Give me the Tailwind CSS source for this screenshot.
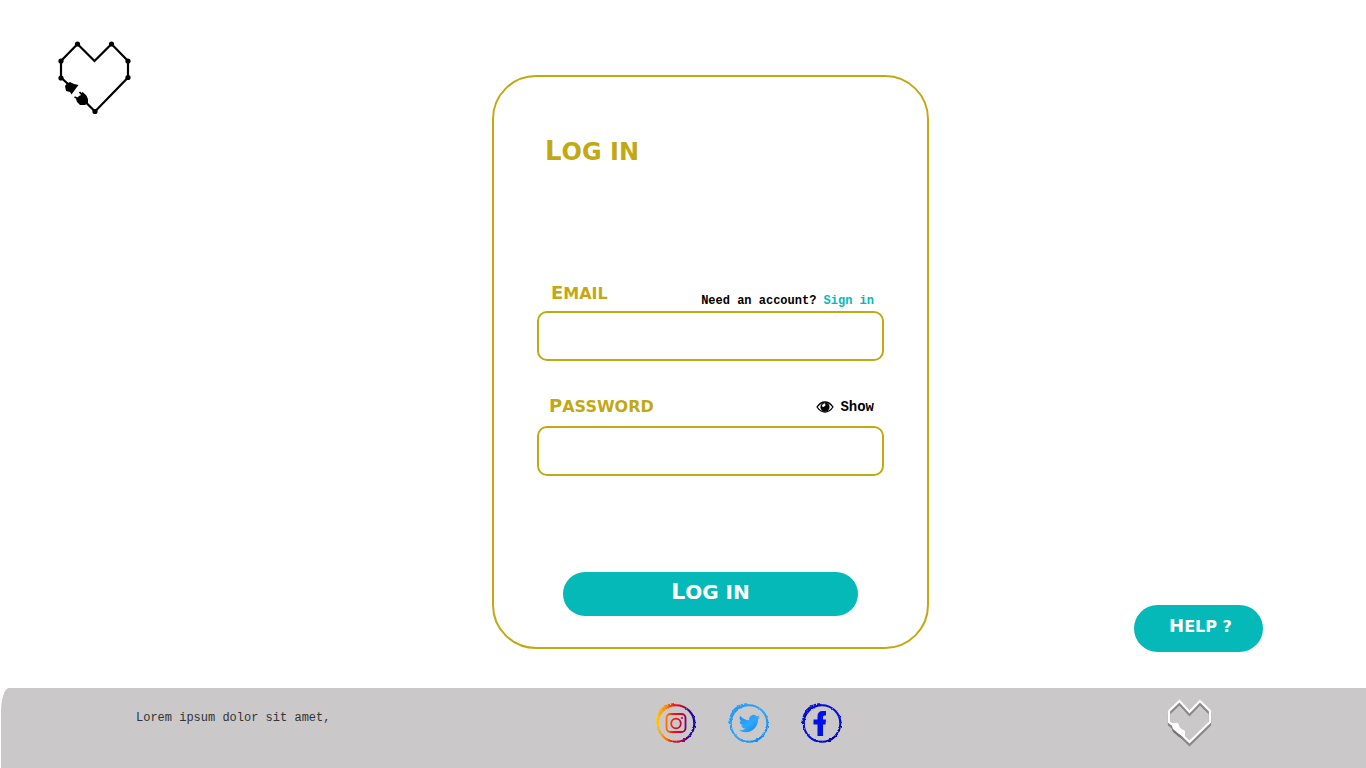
<!DOCTYPE html>
<html lang="en">
<head>
<meta charset="utf-8">
<meta name="viewport" content="width=device-width, initial-scale=1">
<title>Log in</title>
<script src="https://cdn.jsdelivr.net/npm/@tailwindcss/browser@4"></script>
</head>
<body class="flex min-h-screen flex-col bg-white font-['Liberation_Mono',monospace] text-black">
<main class="grid flex-1 grid-cols-[492fr_437fr_437fr] pt-[75px] pb-[39px]">
  <a href="#" aria-label="Home" class="-mt-9 ml-14 size-20 self-start">
    <svg viewBox="0 0 80 80" class="size-20" aria-hidden="true">
      <g fill="none" stroke="#000" stroke-width="2.2">
        <path d="M12 45 5 38.500V22L21.500 5 38.500 22 55.500 5 72 22V38.500L39 72.500 29 62.500"/>
      </g>
      <g fill="#000">
        <circle cx="21.500" cy="5" r="2.600"/><circle cx="55.500" cy="5" r="2.600"/><circle cx="5" cy="22" r="2.600"/><circle cx="72" cy="22" r="2.600"/><circle cx="5" cy="39" r="2.600"/><circle cx="72" cy="38.500" r="2.600"/><circle cx="39" cy="72.500" r="2.600"/>
        <path d="M9 47 11 44.500 14 43 18 45 22.500 46 19.500 50 15.500 55.500 14 53 10 52Z"/>
        <path d="M20 60 23 57 28 54.500 30 56 32 60 32 64 29 66 24 66 21 63Z"/>
        <path d="M18.500 58 23 60M23.500 53 27 57M26 53.500 30 58" stroke="#000" stroke-width="1.800"/>
      </g>
    </svg>
  </a>

  <form onsubmit="return false" class="flex flex-col rounded-[44px] border-2 border-[#c2a914] px-[43px] pt-[58px] pb-[31px]">
    <h1 class="ml-2 h-8 font-[Copperplate,'DejaVu_Sans',sans-serif] text-[24px] leading-8 font-bold text-[#c2a914] uppercase first-letter:text-[26px]">Log in</h1>
    <div class="mt-[114px] flex h-6 items-start justify-between pr-2.5 pl-3.5">
      <label for="email" class="block font-[Copperplate,'DejaVu_Sans',sans-serif] text-[16px] leading-6 font-bold text-[#c2a914] uppercase first-letter:text-[18px]">Email</label>
      <p class="pt-3 text-[12px] leading-4 font-bold">Need an account? <a href="#" class="text-[#06b9b9]">Sign in</a></p>
    </div>
    <input id="email" type="email" class="mt-[6px] h-[50px] w-full rounded-[10px] border-2 border-[#c2a914] px-4 text-[14px]">
    <div class="mt-[33px] flex h-6 items-center justify-between pr-2.5 pl-3">
      <label for="password" class="block font-[Copperplate,'DejaVu_Sans',sans-serif] text-[16px] leading-6 font-bold text-[#c2a914] uppercase first-letter:text-[18px]">Password</label>
      <button type="button" class="flex items-center gap-[6px] pt-px text-[14px] leading-6 font-bold">
        <svg viewBox="0 0 18 12" class="h-3 w-[18px]" aria-hidden="true"><path d="M1 6Q4.500 1 9 1T17 6Q13.500 11 9 11T1 6Z" fill="#fff" stroke="#000" stroke-width="1.300"/><circle cx="9" cy="6" r="4.600"/><path d="M6 5.500Q6 3 9 2.300L9.500 4.500 7.500 6Z" fill="#fff"/></svg>
        Show
      </button>
    </div>
    <input id="password" type="password" class="mt-[8px] h-[50px] w-full rounded-[10px] border-2 border-[#c2a914] px-4 text-[14px]">
    <button type="submit" class="mx-[26px] mt-24 h-11 rounded-full bg-[#06b9b9] pb-1 text-white">
      <span class="block font-[Copperplate,'DejaVu_Sans',sans-serif] text-[20px] leading-6 font-bold uppercase first-letter:text-[22px]">Log in</span>
    </button>
  </form>

  <button type="button" class="mr-[103px] mb-[-3px] h-[47px] w-[129px] self-end justify-self-end rounded-full bg-[#06b9b9] pb-1 pl-1 text-white">
    <span class="block font-[Copperplate,'DejaVu_Sans',sans-serif] text-[16px] leading-6 font-bold uppercase first-letter:text-[18px]">Help ?</span>
  </button>
</main>

<footer class="ml-px grid h-20 grid-cols-[653fr_512fr_200fr] items-start rounded-tl-[8px_24px] bg-[#cac8c9]">
  <p class="pt-[22px] pl-[135px] text-[12px] leading-4 text-[#333]">Lorem ipsum dolor sit amet,</p>
  <nav aria-label="Social" class="flex gap-[29px] pt-[13px]">
    <a href="#" aria-label="Instagram">
      <svg viewBox="0 0 44 44" class="size-11" fill="none" aria-hidden="true">
        <defs>
          <linearGradient id="insta" gradientUnits="userSpaceOnUse" x1="2" y1="22" x2="42" y2="24"><stop stop-color="#ffd000"/><stop offset=".22" stop-color="#ff8500"/><stop offset=".42" stop-color="#fa1608"/><stop offset=".65" stop-color="#c00042"/><stop offset=".85" stop-color="#2a00a0"/><stop offset="1" stop-color="#1600a8"/></linearGradient>
          <filter id="rough" x="-10%" y="-10%" width="120%" height="120%"><feTurbulence type="fractalNoise" baseFrequency=".35" numOctaves="2" seed="4"/><feDisplacementMap in="SourceGraphic" scale="2.500" xChannelSelector="R" yChannelSelector="G"/></filter>
        </defs>
        <g stroke="url(#insta)">
          <g filter="url(#rough)"><circle cx="22" cy="22.500" r="18.300" stroke-width="2.100"/><path d="M3 24Q2 10 14 4M5 13Q10 3 22 3" stroke-width="2" stroke-dasharray="4 1 2 1"/><path d="M39 14Q43 23 36 34" stroke-width="1.500" stroke-dasharray="5 1 2 1"/></g>
          <rect x="12.500" y="13" width="19" height="18" rx="4" stroke-width="1.800"/><circle cx="22" cy="22.500" r="4.800" stroke-width="1.800"/>
        </g>
        <circle cx="28" cy="17" r="1.100" fill="#c00042"/>
      </svg>
    </a>
    <a href="#" aria-label="Twitter">
      <svg viewBox="0 0 44 44" class="size-11" fill="none" aria-hidden="true">
        <defs><linearGradient id="tw" x1="0" x2="1" y1="0" y2="1"><stop stop-color="#188cfa"/><stop offset=".5" stop-color="#30a9fa"/><stop offset="1" stop-color="#087cf8"/></linearGradient></defs>
        <g stroke="url(#tw)" filter="url(#rough)"><circle cx="22" cy="22.500" r="18.300" stroke-width="2"/><path d="M3 24Q2 10 14 4M5 13Q10 3 22 3" stroke-width="2" stroke-dasharray="4 1 2 1"/><path d="M39 14Q43 23 36 34" stroke-width="1.300" stroke-dasharray="5 1 2 1"/></g>
        <path transform="translate(11.500 11.500) scale(.91)" fill="url(#tw)" d="M23.600 4.900a9.400 9.400 0 0 1-2.700.8 4.700 4.700 0 0 0 2.100-2.700 9.700 9.700 0 0 1-3 1.200A4.800 4.800 0 0 0 11.800 8.500 13.600 13.600 0 0 1 2 3.500a4.800 4.800 0 0 0 1.500 6.400 4.800 4.800 0 0 1-2.200-.6 4.800 4.800 0 0 0 3.900 4.800 4.900 4.900 0 0 1-2.200.1 4.800 4.800 0 0 0 4.500 3.300A9.700 9.700 0 0 1 .4 19.500a13.600 13.600 0 0 0 7.400 2.200c9 0 13.900-7.500 13.600-14.300a9.700 9.700 0 0 0 2.200-2.500Z"/>
      </svg>
    </a>
    <a href="#" aria-label="Facebook">
      <svg viewBox="0 0 44 44" class="size-11" fill="none" aria-hidden="true">
        <defs><linearGradient id="fb" x1="0" x2="1" y1="0" y2="1"><stop stop-color="#0000c4"/><stop offset=".5" stop-color="#0010ec"/><stop offset="1" stop-color="#00009c"/></linearGradient></defs>
        <g stroke="url(#fb)" filter="url(#rough)"><circle cx="22" cy="22.500" r="18.300" stroke-width="2"/><path d="M3 24Q2 10 14 4M5 13Q10 3 22 3" stroke-width="2" stroke-dasharray="4 1 2 1"/><path d="M39 14Q43 23 36 34" stroke-width="1.500" stroke-dasharray="5 1 2 1"/></g>
        <path fill="#0010ec" d="M17.500 35V23.500H13.500V18.500H17.500V15.500Q17.500 10 22.500 10H26V14.500H24.500Q23 14.500 23 16V18.500H26L25.500 23.500H23V35Z"/>
      </svg>
    </a>
  </nav>
  <svg viewBox="0 0 50 54" class="mt-2 h-[54px] w-[50px]" aria-hidden="true">
    <defs><g id="heart"><path d="M9 30 4 26V15L14.500 5 24.500 16 35 5 45 15V26L24.500 46 13 35" fill="none" stroke-width="2.200"/><path stroke="none" d="M6 27 13 27 15 32 20 35 20 41 14 38 8 33Z"/></g></defs>
    <use href="#heart" x="-1" y="3" fill="#777" stroke="#888"/><use href="#heart" x="-1" y="2" fill="#777" stroke="#888"/><use href="#heart" x="-1" fill="#fff" stroke="#fff"/>
  </svg>
</footer>
</body>
</html>
